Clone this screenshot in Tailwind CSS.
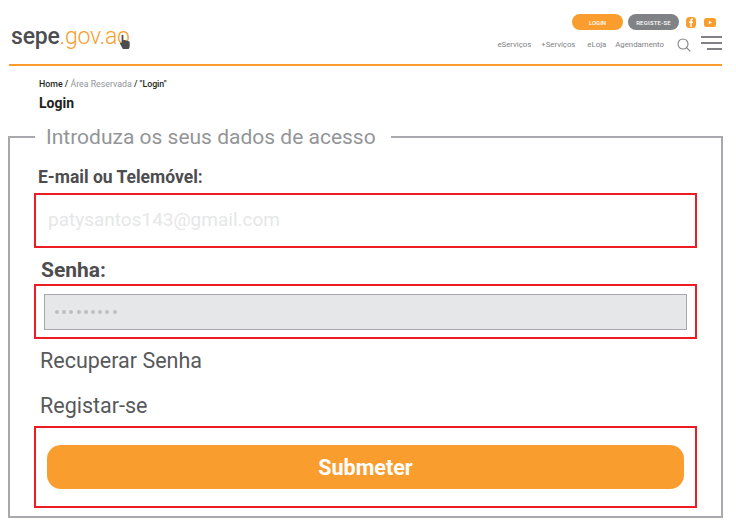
<!DOCTYPE html>
<html lang="pt">
<head>
  <meta charset="UTF-8">
  <title>sepe.gov.ao - Login</title>
  <meta name="viewport" content="width=device-width, initial-scale=1.0">
  <script src="https://cdn.jsdelivr.net/npm/@tailwindcss/browser@4"></script>
</head>
<body class="bg-white font-['Roboto',sans-serif] h-[526px] w-[736px] overflow-hidden">
  <header class="ml-[9px] w-[713px] h-[66px] border-b-2 border-[#f99d2e] flex justify-between">
    <a class="relative mt-[22px] ml-[2px] h-[30px] text-[23px] leading-[30px] tracking-[-0.2px] text-[#4d4d4f] font-medium">sepe<span class="text-[#f99d2e] font-light">.gov.ao</span>
      <svg class="absolute left-[108px] top-[12px]" width="12" height="16" viewBox="0 0 12 16"><path fill="#4d4d4f" d="M2.6 1.2c0-.7 1.8-.7 1.8 0v5l.9-.2c.6-.1 1 .1 1.1.4.7-.3 1.3-.1 1.5.4.7-.2 1.2 0 1.4.5.8-.1 1.4.3 1.4 1v3.6c0 1.300-.5 2-1 3H3.800L1 9.700C.6 8.900 1.500 8.300 2.600 9.300z"/></svg>
    </a>
    <div class="flex flex-col items-end pt-[14px]">
      <div class="flex items-center h-[16px]">
        <a class="w-[51px] h-[16px] rounded-full bg-[#f99d2e] text-white text-[6px] font-medium flex items-center justify-center">LOGIN</a>
        <a class="ml-[5px] w-[51px] h-[16px] rounded-full bg-[#808285] text-white text-[6px] font-medium flex items-center justify-center tracking-[0.2px]">REGISTE-SE</a>
        <svg class="ml-[7px]" width="10" height="11" viewBox="0 0 10 11"><rect width="10" height="11" rx="3.500" fill="#f99d2e"/><path fill="#fff" d="M4.300 10V6H3V4.500h1.300V3.400C4.300 2.200 5 1.600 6 1.600h1v1.500h-.6c-.5 0-.6.2-.6.6v.8H7L6.800 6h-1v4z"/></svg>
        <svg class="ml-[8px] mr-[6px]" width="12" height="9" viewBox="0 0 12 9"><rect width="12" height="9" rx="2.500" fill="#f99d2e"/><path fill="#fff" d="M4.800 2.700v3.600L8 4.500z"/></svg>
      </div>
      <nav class="flex items-center h-[20px] mt-[5px] text-[7.800px] text-[#808285]">
        <a>eServiços</a>
        <a class="ml-[10px]">+Serviços</a>
        <a class="ml-[12px]">eLoja</a>
        <a class="ml-[9px]">Agendamento</a>
        <svg class="ml-[13px]" width="14" height="14" viewBox="0 0 14 14" fill="none" stroke="#808285" stroke-width="1.100"><circle cx="6" cy="6" r="5"/><path d="M9.600 9.600l3.700 3.700"/></svg>
        <div class="ml-[10px] w-[21px] flex flex-col items-end gap-[4px] -mt-[4px]">
          <span class="block w-[21px] h-[2px] bg-[#808285]"></span>
          <span class="block w-[21px] h-[2px] bg-[#808285]"></span>
          <span class="block w-[15px] h-[2px] bg-[#808285]"></span>
        </div>
      </nav>
    </div>
  </header>

  <div class="pl-[39px] pt-[12px]">
    <p class="text-[8.800px] leading-[12px] text-[#231f20] font-medium">Home / <span class="text-[#939598] font-normal">Área Reservada</span> / "Login"</p>
    <h1 class="text-[14px] leading-[18px] mt-[4px] font-bold text-[#231f20]">Login</h1>
  </div>

  <fieldset class="ml-[8px] w-[715px] h-[394px] mt-[12px] border-2 border-[#a7a9ac] pl-[24px] pr-[24px]">
    <legend class="ml-[1px] pl-[11px] pr-[15px] text-[21px] leading-[26px] text-[#939598]">Introduza os seus dados de acesso</legend>
    <label class="block ml-[4px] mt-[16px] text-[17.500px] leading-[22px] font-bold text-[#4d4d4f]">E-mail ou Telemóvel:</label>
    <div class="mt-[5px] w-[663px] h-[55px] border-2 border-[#ed1c24] flex items-center pl-[12px] text-[19px] text-[#e6e7e8]">patysantos143@gmail.com</div>
    <label class="block ml-[7px] mt-[9px] text-[21px] leading-[27px] font-bold text-[#4d4d4f]">Senha:</label>
    <div class="w-[663px] h-[55px] border-2 border-[#ed1c24] flex items-center pl-[8px]">
      <div class="w-[643px] h-[36px] bg-[#e6e7e8] border border-[#a7a9ac] pl-[10px] flex items-center gap-[3.200px]">
        <span class="w-[4px] h-[4px] rounded-full bg-[#bcbec0]"></span>
        <span class="w-[4px] h-[4px] rounded-full bg-[#bcbec0]"></span>
        <span class="w-[4px] h-[4px] rounded-full bg-[#bcbec0]"></span>
        <span class="w-[4px] h-[4px] rounded-full bg-[#bcbec0]"></span>
        <span class="w-[4px] h-[4px] rounded-full bg-[#bcbec0]"></span>
        <span class="w-[4px] h-[4px] rounded-full bg-[#bcbec0]"></span>
        <span class="w-[4px] h-[4px] rounded-full bg-[#bcbec0]"></span>
        <span class="w-[4px] h-[4px] rounded-full bg-[#bcbec0]"></span>
        <span class="w-[4px] h-[4px] rounded-full bg-[#bcbec0]"></span>
      </div>
    </div>
    <a class="block ml-[6px] mt-[8px] text-[21.500px] leading-[28px] text-[#58595b]">Recuperar Senha</a>
    <a class="block ml-[6px] mt-[17px] text-[21.500px] leading-[28px] text-[#58595b]">Registar-se</a>
    <div class="mt-[6px] w-[663px] h-[82px] border-2 border-[#ed1c24] pl-[11px] pt-[17px]">
      <button class="w-[637px] h-[44px] pt-[2px] rounded-[14px] bg-[#f99d2e] text-white text-[21.500px] font-bold">Submeter</button>
    </div>
  </fieldset>
</body>
</html>
